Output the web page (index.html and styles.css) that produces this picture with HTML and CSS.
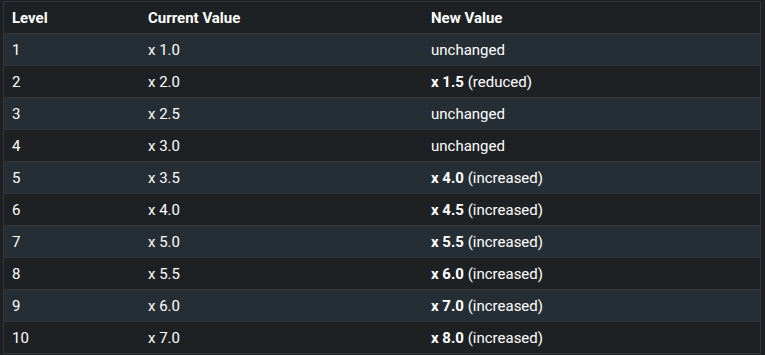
FILE: index.html
```html
<!DOCTYPE html>
<html lang="en">
<head>
    <meta charset="UTF-8">
    <title>Level multipliers</title>
    <link rel="stylesheet" href="styles.css">
</head>
<body>
    <div class="wrap">
        <table class="levels">
            <thead>
                <tr>
                    <th class="col-level">Level</th>
                    <th class="col-current">Current Value</th>
                    <th>New Value</th>
                </tr>
            </thead>
            <tbody>
                <tr><td>1</td><td>x 1.0</td><td>unchanged</td></tr>
                <tr><td>2</td><td>x 2.0</td><td><b>x 1.5</b> (reduced)</td></tr>
                <tr><td>3</td><td>x 2.5</td><td>unchanged</td></tr>
                <tr><td>4</td><td>x 3.0</td><td>unchanged</td></tr>
                <tr><td>5</td><td>x 3.5</td><td><b>x 4.0</b> (increased)</td></tr>
                <tr><td>6</td><td>x 4.0</td><td><b>x 4.5</b> (increased)</td></tr>
                <tr><td>7</td><td>x 5.0</td><td><b>x 5.5</b> (increased)</td></tr>
                <tr><td>8</td><td>x 5.5</td><td><b>x 6.0</b> (increased)</td></tr>
                <tr><td>9</td><td>x 6.0</td><td><b>x 7.0</b> (increased)</td></tr>
                <tr><td>10</td><td>x 7.0</td><td><b>x 8.0</b> (increased)</td></tr>
            </tbody>
        </table>
    </div>
</body>
</html>
```

FILE: styles.css
```css
body {
    margin: 0;
    background-color: #1e2023;
    font-family: Roboto, "Noto Sans", sans-serif;
    color: #ffffff;
}

.wrap {
    padding: 1px 4px 0 3px;
}

.levels {
    width: 100%;
    border-collapse: collapse;
    border: 1px solid #33373b;
    font-size: 15px;
}

.levels th,
.levels td {
    text-align: left;
    padding: 0 8px;
    height: 31px;
    border-top: 1px solid #33373b;
}

.levels th {
    font-weight: bold;
    border-top: none;
}

.col-level {
    width: 120px;
}

.col-current {
    width: 267px;
}

.levels thead tr {
    background-color: #1e2124;
}

.levels tbody tr:nth-child(odd) {
    background-color: #252e34;
}

.levels tbody tr:nth-child(even) {
    background-color: #1e2124;
}

.levels b {
    font-weight: bold;
}
```
